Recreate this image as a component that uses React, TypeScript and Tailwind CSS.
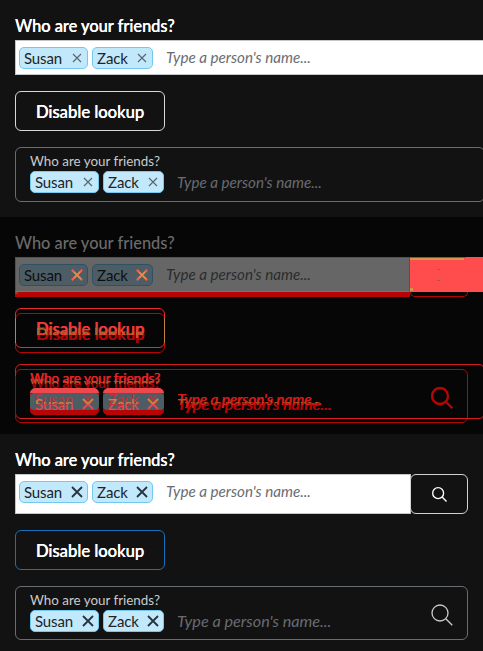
type Palette = {
  frame: string;
  buttonBorder: string;
  buttonText: string;
  label: string;
  chip: string;
  chipText: string;
  cross: string;
  hint: string;
  icon: string;
};

const before: Palette = {
  frame: 'border-[#686c73]',
  buttonBorder: 'border-[#d8d8d8]',
  buttonText: 'text-white [text-shadow:0.3px_0_#ffffff]',
  label: 'text-[#c9cbcc]',
  chip: 'bg-[#c1e8fb] border-[#71c9f0]',
  chipText: 'text-[#212327]',
  cross: 'text-[#59646c]',
  hint: 'text-[#686c73]',
  icon: 'text-[#c9cbcc]',
};

const after: Palette = {
  ...before,
  buttonBorder: 'border-[#1870b8]',
  cross: 'text-[#26343d]',
};

const dimmed: Palette = {
  ...before,
  chip: 'bg-[#4d5d65] border-[#2f5163]',
  chipText: 'text-[#0d0e10]',
  cross: 'text-[#e98a45]',
  hint: 'text-[#2a2c2f]',
};

const brightRed: Palette = {
  frame: 'border-[#d81c20]',
  buttonBorder: 'border-[#e8292d]',
  buttonText: 'text-[#f23a3a] [text-shadow:0.6px_0_#f23a3a]',
  label: 'text-[#e62226] [text-shadow:0.6px_0_#e62226]',
  chip: 'bg-[#ee484d] border-[#ee484d]',
  chipText: 'text-[#c92b32]',
  cross: 'text-[#df3940]',
  hint: 'text-[#d81a1c] [text-shadow:0.6px_0_#d81a1c]',
  icon: 'text-[#b70404]',
};

const darkRed: Palette = {
  frame: 'border-[#b70404]',
  buttonBorder: 'border-[#b70404]',
  buttonText: 'text-[#b70404] [text-shadow:0.8px_0_#b70404]',
  label: 'text-[#a50404] [text-shadow:0.6px_0_#a50404]',
  chip: 'bg-[#b70404] border-[#b70404]',
  chipText: 'text-[#b70404]',
  cross: 'text-[#b70404]',
  hint: 'text-[#b70404] [text-shadow:0.8px_0_#b70404]',
  icon: 'text-[#b70404]',
};

function Cross({ bold, className, tips }: { bold: boolean; className: string; tips?: boolean }) {
  return (
    <svg width="12" height="12" viewBox="0 0 12 12" className={className} fill="none" stroke="currentColor" strokeWidth={bold ? 1.8 : 1.1}>
      {bold ? <path d="M1 1l10 10M11 1L1 11" /> : <path d="M2 2l8 8M10 2l-8 8" />}
      {tips && <path stroke="#ff5151" d="M1 1l2 2M11 1L9 3M1 11l2-2M11 11l-1-1" />}
    </svg>
  );
}

function Search({ size, className, stroke }: { size: number; className: string; stroke: number }) {
  return (
    <svg width={size} height={size} viewBox="0 0 22 22" className={className} fill="none" stroke="currentColor" strokeWidth={stroke}>
      <circle cx="9" cy="9" r="8" />
      <path d="M14.8 14.8l6.5 6.5" />
    </svg>
  );
}

function Chips({ p, bold }: { p: Palette; bold: boolean }) {
  const base = 'flex h-[22px] items-center justify-between rounded-[5px] border pl-1 pr-[4px] text-[15px] leading-5';
  return (
    <div className="flex shrink-0 gap-1">
      <div className={`${base} w-[69px] ${p.chip}`}>
        <span className={`tracking-[-0.15px] ${p.chipText}`}>Susan</span>
        <Cross bold={bold} className={p.cross} tips={p === dimmed} />
      </div>
      <div className={`${base} w-[61px] ${p.chip}`}>
        <span className={`tracking-[-0.1px] ${p.chipText}`}>Zack</span>
        <Cross bold={bold} className={p.cross} tips={p === dimmed} />
      </div>
    </div>
  );
}

function ToggleButton({ p }: { p: Palette }) {
  return (
    <button className={`flex h-10 w-[150px] shrink-0 items-center justify-center rounded-[6px] border pt-[2px] text-[16.6px] font-medium ${p.buttonBorder} ${p.buttonText}`}>
      Disable lookup
    </button>
  );
}

function BoxedLookup({ p, wide, bold }: { p: Palette; wide: boolean; bold: boolean }) {
  return (
    <div className={`flex shrink-0 rounded-[6px] border pl-[14px] ${p.frame} ${wide ? 'h-[55px] w-[470px]' : 'h-[54px] w-[453px]'}`}>
      <div className="flex-1">
        <div className={`h-[23px] pt-[4px] text-[13.4px] leading-[18px] ${p.label}`}>Who are your friends?</div>
        <div className="flex">
          <Chips p={p} bold={bold} />
          <span className={`ml-[13px] whitespace-nowrap italic leading-[22px] ${wide ? 'text-[15.2px]' : 'text-[16.2px]'} ${p.hint}`}>
            Type a person's name...
          </span>
        </div>
      </div>
      {!wide && <Search size={22} stroke={p === darkRed ? 2.3 : 1.3} className={`mr-[14px] mt-[17px] ${p.icon}`} />}
    </div>
  );
}

function Field({ p, className, bold }: { p: Palette; className: string; bold: boolean }) {
  return (
    <div className={`flex shrink-0 border pl-[3px] pt-[6px] ${className}`}>
      <Chips p={p} bold={bold} />
      <span className={`ml-[13px] whitespace-nowrap text-[15.2px] italic leading-[20px] ${p.hint}`}>Type a person's name...</span>
    </div>
  );
}

function Heading({ className }: { className: string }) {
  return <div className={`h-[27px] text-[16.4px] font-medium leading-[26px] ${className}`}>Who are your friends?</div>;
}

function Panel({ mode }: { mode: 'before' | 'after' }) {
  const wide = mode === 'before';
  const p = wide ? before : after;
  return (
    <section className="h-[217px] overflow-hidden bg-[#121212] pl-[15px] pt-[13px]">
      <Heading className="text-white [text-shadow:0.3px_0_#ffffff]" />
      <div className="flex">
        <Field p={p} bold={!wide} className={`border-[#c4c6c8] bg-white ${wide ? 'h-[35px] w-[480px]' : 'h-10 w-[396px]'}`} />
        {!wide && (
          <button className="-ml-px flex h-10 w-[58px] items-center justify-center rounded-[6px] border border-[#d0d2d3] text-white">
            <Search size={15} stroke={2} className="" />
          </button>
        )}
      </div>
      <div className="flex flex-col gap-4 pt-4">
        <ToggleButton p={p} />
        <BoxedLookup p={p} wide={wide} bold={!wide} />
      </div>
    </section>
  );
}

/* Two versions of a chip laid over one another: only the shared area keeps the grey fill. */
function OverlapChip({ className, name }: { className: string; name: string }) {
  const row = 'flex justify-between [grid-area:1/1]';
  return (
    <div className={`grid h-[17px] items-start overflow-hidden rounded-[4px] bg-[#4d5d65] pl-[5px] pr-[5px] text-[15px] leading-5 tracking-[-0.1px] ${className}`}>
      <div className={`${row} mt-[1px] text-[#ee484d]`}>
        <span>{name}</span>
        <Cross bold className="mt-[4px]" />
      </div>
      <div className={`${row} -mt-[4px] text-[#c8303a]`}>
        <span>{name}</span>
        <Cross bold={false} className="mt-[4px]" />
      </div>
      <div className={`${row} mt-[5px] h-[6px] overflow-hidden text-[#c08740]`}>
        <span className="-mt-[4px]">{name}</span>
        <Cross bold className="mt-0" />
      </div>
    </div>
  );
}

function DiffPanel() {
  const layer = 'flex w-[470px] flex-col [grid-area:1/1]';
  return (
    <section className="h-[217px] overflow-hidden bg-[#060606] pl-[15px] pt-[13px]">
      <Heading className="text-[#6b6b6b]" />
      <div className="flex">
        <Field p={dimmed} bold className="h-[35px] w-[395px] border-[#515253] border-b-[#f33f40] bg-[#666]" />
        <div className="flex h-[35px] flex-1 flex-col bg-[#ff4d4d]">
          <div className="h-px w-[56px] bg-[#626262]" />
          <div className="h-[2px] w-[54px] rounded-b-[1px] bg-[#db944b]" />
          <div className="ml-[27px] mt-[9px] h-px w-[3px] bg-[#896262]" />
          <div className="ml-[27px] mt-[10px] h-px w-[3px] bg-[#896262]" />
          <div className="mt-[7px] h-[3px] w-[3px] bg-[#db944b]" />
        </div>
      </div>
      <div className="flex h-[5px]">
        <div className="h-[5px] w-[395px] bg-[#b70404]">
          <div className="h-[2px] w-[3px] bg-[#8a4b08]" />
        </div>
        <div className="h-[5px] w-[58px] rounded-b-[5px] border border-t-0 border-[#b70404]" />
      </div>

      <div className="grid items-start">
        <div className={`${layer} gap-4 pt-4`}>
          <ToggleButton p={darkRed} />
          <BoxedLookup p={darkRed} wide={false} bold />
        </div>
        <div className={`${layer} gap-4 pt-[11px]`}>
          <ToggleButton p={brightRed} />
          <BoxedLookup p={brightRed} wide bold={false} />
        </div>
        <div className={`${layer} pt-[21px]`}>
          <div className="flex h-[25px] w-[150px] justify-center border-x border-[#c2803d] pt-[10px]">
            <div className="h-[7px] overflow-hidden whitespace-nowrap text-[16.6px] font-medium leading-6 text-[#a56b2c]">
              <div className="-mt-[5px]">Disable lookup</div>
            </div>
          </div>
          <div className="mt-[33px] flex h-[41px] flex-col border-l border-[#343639] pl-[14px]">
            <div className="mt-[3px] h-[5px] overflow-hidden text-[13.4px] leading-[18px] text-[#9a6226]">
              <div className="-mt-[5px]">Who are your friends?</div>
            </div>
            <div className="mt-[9px] flex h-[22px] gap-1">
              <div className="h-[22px] w-[69px] rounded-b-[5px] bg-[#b70404]">
                <OverlapChip name="Susan" className="w-[69px]" />
              </div>
              <div className="h-[22px] w-[61px] rounded-b-[5px] bg-[#b70404]">
                <OverlapChip name="Zack" className="w-[61px]" />
              </div>
              <div className="ml-[9px] mt-[5px] h-[5px] overflow-hidden whitespace-nowrap text-[16.2px] italic leading-[22px] text-[#9c5c18]">
                <div className="-mt-[5px]">Type a person's name...</div>
              </div>
            </div>
          </div>
        </div>
      </div>
    </section>
  );
}

export default function App() {
  return (
    <main className="h-[651px] w-full overflow-hidden bg-[#121212] font-['Lato','Noto_Sans',sans-serif]">
      <Panel mode="before" />
      <DiffPanel />
      <Panel mode="after" />
    </main>
  );
}
